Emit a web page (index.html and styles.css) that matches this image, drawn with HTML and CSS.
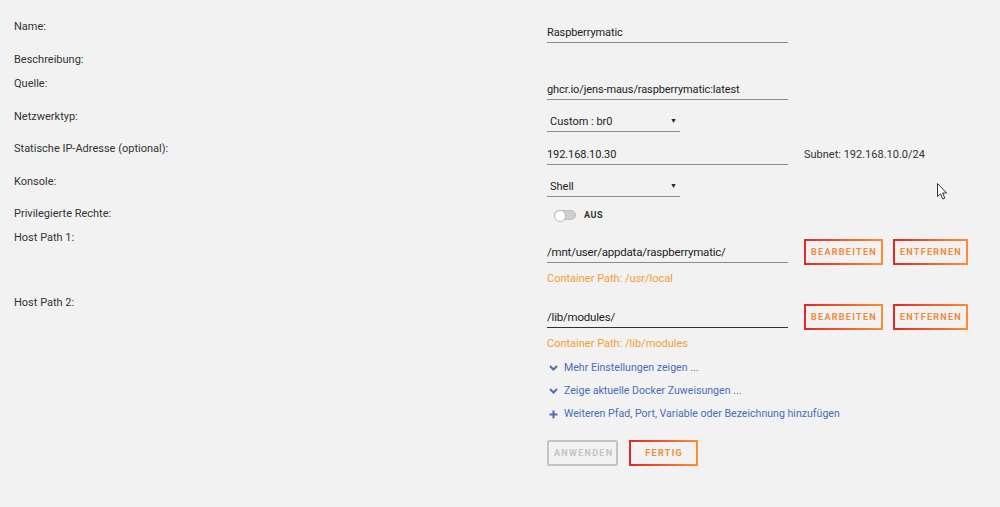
FILE: index.html
```html
<!DOCTYPE html>
<html lang="de">
<head>
    <meta charset="UTF-8">
    <meta name="viewport" content="width=device-width, initial-scale=1.0">
    <title>Docker Container bearbeiten</title>
    <link rel="stylesheet" href="styles.css">
</head>
<body>
    <div class="form">
        <div class="row">
            <div class="label">Name:</div>
            <div class="field"><input class="text" type="text" value="Raspberrymatic"></div>
        </div>
        <div class="row">
            <div class="label">Beschreibung:</div>
            <div class="field"></div>
        </div>
        <div class="row">
            <div class="label">Quelle:</div>
            <div class="field"><input class="text" type="text" value="ghcr.io/jens-maus/raspberrymatic:latest"></div>
        </div>
        <div class="row">
            <div class="label">Netzwerktyp:</div>
            <div class="field">
                <div class="select"><span>Custom : br0</span><span class="arrow">&#9660;</span></div>
            </div>
        </div>
        <div class="row">
            <div class="label">Statische IP-Adresse (optional):</div>
            <div class="field inline">
                <input class="text" type="text" value="192.168.10.30">
                <span class="hint">Subnet: 192.168.10.0/24</span>
            </div>
        </div>
        <div class="row">
            <div class="label">Konsole:</div>
            <div class="field">
                <div class="select"><span>Shell</span><span class="arrow">&#9660;</span></div>
            </div>
        </div>
        <div class="row">
            <div class="label">Privilegierte Rechte:</div>
            <div class="field toggle">
                <span class="switch"><span class="knob"></span></span>
                <span class="state">AUS</span>
            </div>
        </div>
        <div class="row">
            <div class="label">Host Path 1:</div>
            <div class="field">
                <div class="path-line">
                    <input class="text path" type="text" value="/mnt/user/appdata/raspberrymatic/">
                    <button class="btn">Bearbeiten</button>
                    <button class="btn">Entfernen</button>
                </div>
                <div class="note">Container Path: /usr/local</div>
            </div>
        </div>
        <div class="row">
            <div class="label">Host Path 2:</div>
            <div class="field">
                <div class="path-line">
                    <input class="text path focus" type="text" value="/lib/modules/">
                    <button class="btn">Bearbeiten</button>
                    <button class="btn">Entfernen</button>
                </div>
                <div class="note">Container Path: /lib/modules</div>
            </div>
        </div>

        <div class="links">
            <a class="link" href="#">
                <svg width="9" height="6" viewBox="0 0 9 6"><path d="M1 1 L4.5 4.5 L8 1" fill="none" stroke="#486dba" stroke-width="2"/></svg>
                Mehr Einstellungen zeigen ...
            </a>
            <a class="link" href="#">
                <svg width="9" height="6" viewBox="0 0 9 6"><path d="M1 1 L4.5 4.5 L8 1" fill="none" stroke="#486dba" stroke-width="2"/></svg>
                Zeige aktuelle Docker Zuweisungen ...
            </a>
            <a class="link" href="#">
                <svg width="9" height="9" viewBox="0 0 9 9"><path d="M4.5 0.5 V8.5 M0.5 4.5 H8.5" fill="none" stroke="#486dba" stroke-width="2"/></svg>
                Weiteren Pfad, Port, Variable oder Bezeichnung hinzufügen
            </a>
        </div>

        <div class="actions">
            <button class="btn disabled">Anwenden</button>
            <button class="btn wide">Fertig</button>
        </div>
    </div>

    <svg class="cursor" width="12" height="18" viewBox="0 0 12 18">
        <path d="M0.5 0.5 L0.5 13.5 L3.5 10.8 L5.8 16 L7.8 15.1 L5.6 10 L9.6 10 Z" fill="#fff" stroke="#333" stroke-width="1"/>
    </svg>
</body>
</html>
```

FILE: styles.css
```css
body {
    margin: 0;
    background: #f2f2f2;
    font-family: Roboto, "Open Sans", sans-serif;
    font-size: 11px;
    color: #333;
}
.form {
    padding: 20px 0 0 14px;
}
.row {
    display: flex;
    align-items: flex-start;
    margin-bottom: 10px;
}
.label {
    flex: none;
    width: 533px;
    line-height: 14px;
}
.field {
    min-height: 13px;
}
.field.inline {
    display: flex;
    align-items: center;
    gap: 16px;
}
.text {
    display: block;
    width: 241px;
    height: 21px;
    margin: 2px 0 0 0;
    padding: 0;
    border: 0;
    border-bottom: 1px solid #8a8a8a;
    background: transparent;
    font: inherit;
    letter-spacing: -0.1px;
    color: #222;
    box-sizing: border-box;
}
.text.path {
    font-size: 11.5px;
    letter-spacing: -0.2px;
    margin: 0;
}
.text.focus {
    border-bottom-color: #333;
}
.hint {
    margin-top: 2px;
    color: #333;
}
.select {
    display: flex;
    justify-content: space-between;
    align-items: center;
    width: 133px;
    height: 21px;
    margin-top: 1px;
    padding: 0 3px;
    border-bottom: 1px solid #8a8a8a;
    box-sizing: border-box;
    color: #222;
}
.select .arrow {
    font-size: 7px;
}
.toggle {
    display: flex;
    align-items: center;
    gap: 8px;
    margin: 1px 0 0 7px;
}
.switch {
    position: relative;
    width: 22px;
    height: 10px;
    border-radius: 5px;
    background: #cfcfcf;
    border: 1px solid #bdbdbd;
    box-sizing: border-box;
}
.knob {
    position: absolute;
    left: -1px;
    top: -1px;
    width: 10px;
    height: 10px;
    border-radius: 50%;
    background: #fff;
    border: 1px solid #bdbdbd;
}
.state {
    font-size: 9px;
    font-weight: bold;
    letter-spacing: 0.5px;
}
.path-line {
    display: flex;
    align-items: center;
    margin-top: 8px;
}
.path-line .btn {
    margin-left: 16px;
}
.path-line .btn + .btn {
    margin-left: 10px;
}
.note {
    margin-top: 7px;
    line-height: 14px;
    color: #f0a030;
}
.btn {
    height: 26px;
    padding: 0 4px 0 5px;
    border: 2px solid;
    border-image: linear-gradient(90deg, #e22828, #ff8c2f) 1;
    background: transparent;
    font-family: inherit;
    font-size: 9px;
    font-weight: bold;
    letter-spacing: 1.3px;
    text-transform: uppercase;
    color: #f28a3a;
    box-sizing: border-box;
    cursor: pointer;
}
.btn.disabled {
    border-image: none;
    border-color: #c4c4c4;
    color: #c4c4c4;
    border-radius: 2px;
    padding: 0 3px 0 5px;
}
.btn.wide {
    padding: 0 13px 0 14px;
}
.links {
    margin: 0 0 0 533px;
}
.link {
    display: flex;
    align-items: center;
    gap: 6px;
    line-height: 14px;
    font-size: 10.6px;
    margin-bottom: 9px;
    color: #486dba;
    text-decoration: none;
}
.link svg {
    margin-left: 2px;
}
.actions {
    display: flex;
    gap: 11px;
    margin: 19px 0 0 533px;
}
.cursor {
    position: absolute;
    left: 937px;
    top: 183px;
}
```
